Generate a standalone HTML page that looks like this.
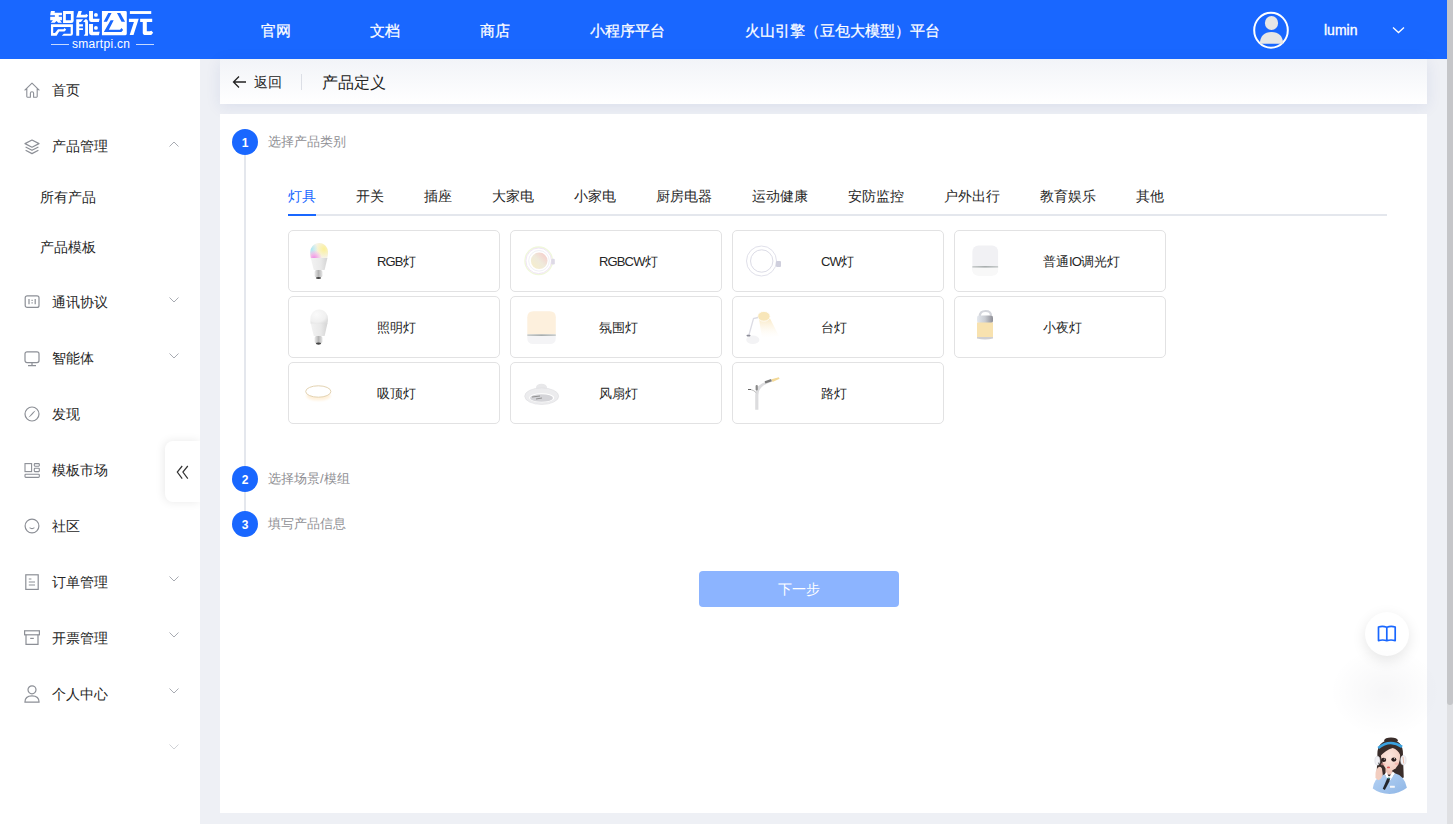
<!DOCTYPE html>
<html><head><meta charset="utf-8">
<style>
*{margin:0;padding:0;box-sizing:border-box}
html,body{width:1453px;height:824px;overflow:hidden;background:#eef0f5;font-family:"Liberation Sans",sans-serif;color:#333}
.abs{position:absolute}
#hdr{position:absolute;left:0;top:0;width:1447px;height:59px;background:#1967ff}
#side{position:absolute;left:0;top:59px;width:200px;height:765px;background:#fff}
#scroll{position:absolute;left:1447px;top:0;width:6px;height:824px;background:#dfe0e3}
#thumb{position:absolute;left:1447px;top:0;width:6px;height:705px;background:#c5c6c9;border-radius:0 0 3px 3px}
.nav{position:absolute;top:21px;font-size:15px;line-height:20px;color:#fff;white-space:nowrap;-webkit-text-stroke:0.25px #fff}
.mi{position:absolute;left:52px;font-size:14px;line-height:20px;color:#262626;white-space:nowrap}
.sub{position:absolute;left:40px;font-size:14px;line-height:20px;color:#262626;white-space:nowrap}
.ico{position:absolute;left:24px;width:16px;height:16px}
.chev{position:absolute;left:169px;width:10px;height:6px}
#crumb{position:absolute;left:220px;top:59px;width:1207px;height:45px;background:linear-gradient(#f2f4f8,#fff);box-shadow:0 3px 16px rgba(30,60,140,.09)}
#card{position:absolute;left:220px;top:114px;width:1207px;height:699px;background:#fff}
.step{position:absolute;left:232px;width:26px;height:26px;border-radius:50%;background:#1967ff;color:#fff;font-weight:bold;font-size:12px;line-height:28px;text-align:center}
.stxt{position:absolute;left:268px;font-size:13px;line-height:18px;color:#8f8f94;white-space:nowrap}
.tab{position:absolute;top:186px;font-size:14px;line-height:20px;color:#262626;white-space:nowrap}
.pc{position:absolute;width:212px;height:62px;border:1px solid #e2e2e3;border-radius:5px;background:#fff}
.pc .l{font-style:normal;letter-spacing:-0.85px}
.pc .t{position:absolute;left:88px;top:22px;font-size:13px;line-height:18px;color:#262626;white-space:nowrap}
.pc .im{position:absolute;left:9px;top:7px;width:44px;height:46px}
</style></head><body>
<svg width="0" height="0" style="position:absolute">
<defs>
<radialGradient id="yel"><stop offset="0" stop-color="#fbf09a"/><stop offset="1" stop-color="#fbf09a" stop-opacity="0"/></radialGradient>
<radialGradient id="cyan"><stop offset="0" stop-color="#a8e6f4"/><stop offset="1" stop-color="#a8e6f4" stop-opacity="0"/></radialGradient>
<radialGradient id="mag"><stop offset="0" stop-color="#f08ee6"/><stop offset="1" stop-color="#f08ee6" stop-opacity="0"/></radialGradient>
<radialGradient id="rgbA" cx="0.25" cy="0.3" r="0.8"><stop offset="0" stop-color="#b8ecf6"/><stop offset="0.45" stop-color="#f6f6d8"/><stop offset="1" stop-color="#f8ee9a"/></radialGradient>
<linearGradient id="rgbB" x1="0" y1="0" x2="0" y2="1"><stop offset="0" stop-color="#fff" stop-opacity="0"/><stop offset="1" stop-color="#f0a0e8" stop-opacity=".85"/></linearGradient>
<linearGradient id="bodyG" x1="0" y1="0" x2="1" y2="0"><stop offset="0" stop-color="#f2f2f2"/><stop offset=".6" stop-color="#e9e9e9"/><stop offset="1" stop-color="#d4d4d4"/></linearGradient>
<linearGradient id="baseG" x1="0" y1="0" x2="1" y2="0"><stop offset="0" stop-color="#ececec"/><stop offset=".5" stop-color="#b4b4b4"/><stop offset="1" stop-color="#e6e6e6"/></linearGradient>
<radialGradient id="domeW" cx="0.35" cy="0.35" r="0.75"><stop offset="0" stop-color="#fafafa"/><stop offset=".7" stop-color="#f0f0f0"/><stop offset="1" stop-color="#dcdcdc"/></radialGradient>
<linearGradient id="pastel" x1="0" y1="1" x2="1" y2="0"><stop offset="0" stop-color="#f7efc8"/><stop offset=".5" stop-color="#efeadb"/><stop offset="1" stop-color="#f6c8c8"/></linearGradient>
<linearGradient id="capG" x1="0" y1="0" x2="1" y2="0"><stop offset="0" stop-color="#e4e8ee"/><stop offset=".5" stop-color="#c9ccd2"/><stop offset="1" stop-color="#8e8e96"/></linearGradient>
<linearGradient id="beam" x1="0" y1="0" x2="0" y2="1"><stop offset="0" stop-color="#f9e8c2"/><stop offset="1" stop-color="#fffaf0" stop-opacity="0"/></linearGradient>
<linearGradient id="stripe" x1="0" y1="0" x2="1" y2="0"><stop offset="0" stop-color="#c8cccc"/><stop offset=".5" stop-color="#a8aeae"/><stop offset="1" stop-color="#c8cccc"/></linearGradient>
<filter id="blur1" x="-50%" y="-50%" width="200%" height="200%"><feGaussianBlur stdDeviation="1.2"/></filter>
<filter id="blur05" x="-50%" y="-50%" width="200%" height="200%"><feGaussianBlur stdDeviation="0.5"/></filter>
</defs></svg>
<div id="hdr"></div>
<div id="side"></div>
<div id="crumb"></div>
<div id="card"></div>
<div id="scroll"></div><div id="thumb"></div>

<!-- logo -->
<svg class="abs" style="left:0;top:0" width="200" height="59" viewBox="0 0 200 59">
<g transform="translate(48,8) scale(0.03717)" fill="#fff" fill-rule="evenodd">
<path d="M80,80 L185,80 L178,130 L375,130 L375,192 L290,192 L290,235 L375,235 L375,330 L322,330 L375,400 L272,400 L230,348 L182,400 L75,400 L132,330 L60,330 L60,235 L185,235 L185,192 L60,192 L68,130 Z"/>
<path d="M405,80 L690,80 L690,340 Q690,405 625,405 L405,405 Z M480,160 L480,330 L615,330 L615,160 Z"/>
<path d="M80,435 L670,435 L670,690 Q670,745 610,745 L372,745 L425,690 L610,690 L610,510 L140,510 L140,672 L188,672 L268,575 L418,575 L448,540 L490,585 L442,630 L300,630 L232,745 L80,745 Z"/>
<path d="M820,80 L910,80 L882,180 L1000,180 L1040,160 L1078,205 L1040,255 L760,255 Z"/>
<path d="M760,300 L945,300 L885,378 L840,378 L840,435 L940,435 L940,500 L840,500 L840,545 L940,545 L940,595 L840,595 L840,745 L760,745 Z"/>
<path d="M945,372 L1005,300 L1035,300 Q1075,320 1075,380 L1075,745 L962,745 L1000,690 L1000,385 Z"/>
<path d="M1105,80 L1210,80 L1210,292 L1390,292 L1368,380 L1168,380 Q1105,380 1105,318 Z"/>
<circle cx="1290" cy="185" r="52"/>
<path d="M1105,430 L1210,430 L1210,642 L1390,642 L1368,730 L1168,730 Q1105,730 1105,668 Z"/>
<circle cx="1290" cy="535" r="52"/>
</g>
<g transform="translate(100,8) scale(0.03853)" fill="#fff" fill-rule="evenodd">
<path d="M50,75 L660,75 Q695,75 695,110 L695,670 Q695,705 660,705 L50,705 Z M215,130 L95,355 L180,355 L300,130 Z M440,130 L560,355 L650,355 L525,130 Z M275,320 L100,625 L555,625 L600,570 L560,520 L520,565 L230,565 L355,320 Z"/>
<path d="M775,80 L1330,80 L1330,155 L775,155 Z"/>
<path d="M750,280 L1005,280 L870,700 L770,700 L880,365 L750,365 Z"/>
<path d="M1042,280 L1355,280 L1355,365 L1215,365 L1215,605 L1295,605 L1335,590 L1380,640 L1330,700 L1180,700 Q1110,700 1110,640 L1110,365 L1042,365 Z"/>
</g>
<path d="M51 44.5 H69 M136 44.5 H154" stroke="#fff" stroke-opacity=".75" stroke-width="1"/>
</svg>
<div class="abs" style="left:72px;top:37px;font-size:12px;line-height:14px;letter-spacing:0.3px;color:#fff;white-space:nowrap">smartpi.cn</div>

<!-- nav -->
<div class="nav" style="left:261px">官网</div>
<div class="nav" style="left:370px">文档</div>
<div class="nav" style="left:480px">商店</div>
<div class="nav" style="left:590px">小程序平台</div>
<div class="nav" style="left:745px">火山引擎（豆包大模型）平台</div>

<!-- user -->
<svg class="abs" style="left:1253px;top:11px" width="36" height="38" viewBox="0 0 36 38">
<ellipse cx="18" cy="19.2" rx="16.8" ry="17.5" fill="none" stroke="#fff" stroke-width="2"/>
<ellipse cx="18.5" cy="12" rx="6.6" ry="7" fill="#e6e6e6"/>
<path d="M6.8 32.8 Q7.5 21.2 18.5 21.1 Q29.5 21.2 30.2 32.8 Z" fill="#e6e6e6"/>
</svg>
<div class="abs" style="left:1324px;top:21px;font-size:14px;line-height:18px;color:#fff;-webkit-text-stroke:0.35px #fff">lumin</div>
<svg class="abs" style="left:1392px;top:26px" width="13" height="8" viewBox="0 0 13 8"><path d="M1 1.5 L6.5 6.5 L12 1.5" fill="none" stroke="#fff" stroke-width="1.3"/></svg>


<!-- sidebar -->
<svg class="ico" style="top:82px" viewBox="0 0 16 16"><path d="M0.6 8.4 L8 1.2 L15.4 8.4 M2.8 6.4 V14.6 Q2.8 15.2 3.4 15.2 H6.4 V11.2 Q6.4 9.8 8 9.8 Q9.6 9.8 9.6 11.2 V15.2 H12.6 Q13.2 15.2 13.2 14.6 V6.4" fill="none" stroke="#8c8f96" stroke-width="1.1" stroke-linejoin="round"/></svg>
<div class="mi" style="top:80px">首页</div>

<svg class="ico" style="top:139px" viewBox="0 0 16 16"><path d="M8 1 L15 4.6 L8 8.2 L1 4.6 Z M1.6 8 L8 11.3 L14.4 8 M1.6 11.2 L8 14.6 L14.4 11.2" fill="none" stroke="#8c8f96" stroke-width="1.2" stroke-linejoin="round"/></svg>
<div class="mi" style="top:136px">产品管理</div>
<svg class="chev" style="top:141px" viewBox="0 0 10 6"><path d="M0.5 5.5 L5 1 L9.5 5.5" fill="none" stroke="#a8abb2" stroke-width="1"/></svg>

<div class="sub" style="top:187px">所有产品</div>
<div class="sub" style="top:237px">产品模板</div>

<svg class="ico" style="top:294px" viewBox="0 0 16 16"><rect x="1.2" y="1.8" width="13.8" height="11.6" rx="2" fill="none" stroke="#8c8f96" stroke-width="1.2"/><path d="M5 5 V10.2 M11.2 5 V10.2" stroke="#8c8f96" stroke-width="1.2"/><path d="M8.1 5.8 V6.9 M8.1 8.3 V9.4" stroke="#8c8f96" stroke-width="1.2"/></svg>
<div class="mi" style="top:292px">通讯协议</div>
<svg class="chev" style="top:297px" viewBox="0 0 10 6"><path d="M0.5 0.5 L5 5 L9.5 0.5" fill="none" stroke="#a8abb2" stroke-width="1"/></svg>

<svg class="ico" style="top:351px" viewBox="0 0 16 16"><rect x="1" y="0.8" width="14" height="10.8" rx="2" fill="none" stroke="#8c8f96" stroke-width="1.2"/><path d="M8 11.6 V14.6 M4 14.6 H12" stroke="#8c8f96" stroke-width="1.2"/></svg>
<div class="mi" style="top:348px">智能体</div>
<svg class="chev" style="top:353px" viewBox="0 0 10 6"><path d="M0.5 0.5 L5 5 L9.5 0.5" fill="none" stroke="#a8abb2" stroke-width="1"/></svg>

<svg class="ico" style="top:406px" viewBox="0 0 16 16"><circle cx="8" cy="8" r="7" fill="none" stroke="#8c8f96" stroke-width="1.2"/><path d="M11.6 4.4 Q8.8 5.4 4.4 11.6 Q7.2 10.6 11.6 4.4 Z" fill="#8c8f96"/></svg>
<div class="mi" style="top:404px">发现</div>

<svg class="ico" style="top:462px" viewBox="0 0 16 16"><rect x="1" y="1.6" width="6.6" height="8" fill="none" stroke="#8c8f96" stroke-width="1.1"/><rect x="10.3" y="1.6" width="5" height="2.6" rx="0.6" fill="none" stroke="#8c8f96" stroke-width="1.1"/><rect x="10.3" y="6.3" width="5" height="3.3" rx="0.6" fill="none" stroke="#8c8f96" stroke-width="1.1"/><rect x="1" y="12.2" width="14.3" height="3.2" rx="0.8" fill="none" stroke="#8c8f96" stroke-width="1.1"/></svg>
<div class="mi" style="top:460px">模板市场</div>

<svg class="ico" style="top:518px" viewBox="0 0 16 16"><circle cx="8" cy="8" r="6.9" fill="none" stroke="#8c8f96" stroke-width="1.2"/><path d="M5.6 9.6 Q8 11.6 10.4 9.6" fill="none" stroke="#8c8f96" stroke-width="1.2"/></svg>
<div class="mi" style="top:516px">社区</div>

<svg class="ico" style="top:574px" viewBox="0 0 16 16"><rect x="1.8" y="0.8" width="12.4" height="14.6" fill="none" stroke="#8c8f96" stroke-width="1.2"/><path d="M4.8 5 H7.4 M4.8 8 H11 M4.8 11 H11" stroke="#8c8f96" stroke-width="1.2"/></svg>
<div class="mi" style="top:572px">订单管理</div>
<svg class="chev" style="top:576px" viewBox="0 0 10 6"><path d="M0.5 0.5 L5 5 L9.5 0.5" fill="none" stroke="#a8abb2" stroke-width="1"/></svg>

<svg class="ico" style="top:630px" viewBox="0 0 16 16"><rect x="0.6" y="0.8" width="14.8" height="4" fill="none" stroke="#8c8f96" stroke-width="1.2"/><path d="M2 4.8 V14.4 H14 V4.8" fill="none" stroke="#8c8f96" stroke-width="1.2"/><path d="M6.2 8.4 H9.8" stroke="#8c8f96" stroke-width="1.2"/></svg>
<div class="mi" style="top:628px">开票管理</div>
<svg class="chev" style="top:632px" viewBox="0 0 10 6"><path d="M0.5 0.5 L5 5 L9.5 0.5" fill="none" stroke="#a8abb2" stroke-width="1"/></svg>

<svg class="ico" style="top:685px;height:18px" viewBox="0 0 16 18"><circle cx="8" cy="4.8" r="4" fill="none" stroke="#8c8f96" stroke-width="1.2"/><path d="M0.9 17.2 Q0.9 10.8 8 10.8 Q15.1 10.8 15.1 17.2 Z" fill="none" stroke="#8c8f96" stroke-width="1.2" stroke-linejoin="round"/></svg>
<div class="mi" style="top:684px">个人中心</div>
<svg class="chev" style="top:688px" viewBox="0 0 10 6"><path d="M0.5 0.5 L5 5 L9.5 0.5" fill="none" stroke="#a8abb2" stroke-width="1"/></svg>

<svg class="chev" style="top:744px" viewBox="0 0 10 6"><path d="M0.5 0.5 L5 5 L9.5 0.5" fill="none" stroke="#d0d2d6" stroke-width="1"/></svg>

<!-- collapse btn -->
<div class="abs" style="left:165px;top:441px;width:35px;height:61px;background:#fff;border-radius:8px 0 0 8px;box-shadow:-1px 0 10px rgba(0,0,0,.09);clip-path:inset(-20px 0 -20px -20px)"></div>
<svg class="abs" style="left:176px;top:465px" width="13" height="15" viewBox="0 0 13 15"><path d="M6.2 1 L1.3 7 L6.2 13.6 M11.8 1 L6.9 7 L11.8 13.6" fill="none" stroke="#333" stroke-width="1.2"/></svg>


<!-- crumb -->
<svg class="abs" style="left:232px;top:75px" width="15" height="14" viewBox="0 0 15 14"><path d="M7 1.5 L1.5 7 L7 12.5 M1.5 7 H14" fill="none" stroke="#222" stroke-width="1.3"/></svg>
<div class="abs" style="left:254px;top:72px;font-size:14px;line-height:20px;color:#222;white-space:nowrap">返回</div>
<div class="abs" style="left:301px;top:74px;width:1px;height:16px;background:#dcdfe6"></div>
<div class="abs" style="left:322px;top:72px;font-size:16px;line-height:22px;color:#222;white-space:nowrap">产品定义</div>

<!-- steps -->
<div class="abs" style="left:244px;top:155px;width:2px;height:311px;background:#e4e7ed"></div>
<div class="abs" style="left:244px;top:492px;width:2px;height:19px;background:#e4e7ed"></div>
<div class="step" style="top:129px">1</div>
<div class="stxt" style="top:133px">选择产品类别</div>
<div class="step" style="top:466px">2</div>
<div class="stxt" style="top:470px">选择场景/模组</div>
<div class="step" style="top:511px">3</div>
<div class="stxt" style="top:515px">填写产品信息</div>

<!-- tabs -->
<div class="abs" style="left:288px;top:214px;width:1099px;height:2px;background:#e4e7ed"></div>
<div class="abs" style="left:288px;top:214px;width:28px;height:2px;background:#1967ff"></div>
<div class="tab" style="left:288px;color:#1967ff">灯具</div>
<div class="tab" style="left:356px">开关</div>
<div class="tab" style="left:424px">插座</div>
<div class="tab" style="left:492px">大家电</div>
<div class="tab" style="left:574px">小家电</div>
<div class="tab" style="left:656px">厨房电器</div>
<div class="tab" style="left:752px">运动健康</div>
<div class="tab" style="left:848px">安防监控</div>
<div class="tab" style="left:944px">户外出行</div>
<div class="tab" style="left:1040px">教育娱乐</div>
<div class="tab" style="left:1136px">其他</div>

<!-- cards -->
<div class="pc" style="left:288px;top:230px"><svg class="im" viewBox="0 0 44 46"><clipPath id="domeClip"><path d="M12.3 15.5 A8.9 9.6 0 1 1 30 15.5 Q29.8 18.5 29.3 20.5 L12.9 20.5 Q12.3 18.5 12.3 15.5 Z"/></clipPath><g clip-path="url(#domeClip)"><rect x="10" y="4" width="22" height="18" fill="#f6f3e8"/><circle cx="26" cy="11" r="9" fill="url(#yel)"/><circle cx="13" cy="11" r="7" fill="url(#cyan)"/><circle cx="16" cy="20" r="8" fill="url(#mag)"/></g><path d="M12.8 20 L29.4 20 Q28 26 26.6 32 L15.8 32 Q14.2 26 12.8 20 Z" fill="url(#bodyG)"/><rect x="16.5" y="32" width="8" height="7.4" rx="2" fill="url(#baseG)"/><ellipse cx="20.5" cy="40" rx="2.6" ry="1" fill="#444"/></svg><span class="t"><i class="l">RGB</i>灯</span></div>
<div class="pc" style="left:510px;top:230px"><svg class="im" viewBox="0 0 44 46"><circle cx="18.7" cy="22.8" r="13.8" fill="none" stroke="#f0f8dc" stroke-width="1.4" filter="url(#blur05)"/><circle cx="18.7" cy="22.8" r="12.8" fill="#fff" stroke="#ead8f0" stroke-width=".7"/><circle cx="19" cy="22.8" r="10.3" fill="none" stroke="#ececf2" stroke-width=".8"/><circle cx="19.2" cy="22.8" r="8.3" fill="url(#pastel)" filter="url(#blur05)"/><rect x="31.2" y="20.8" width="3.6" height="5.6" rx="1.2" fill="#dedae6"/></svg><span class="t"><i class="l">RGBCW</i>灯</span></div>
<div class="pc" style="left:732px;top:230px"><svg class="im" viewBox="0 0 44 46"><circle cx="19.5" cy="23" r="15" fill="#fff" stroke="#e0e0ea" stroke-width="1"/><circle cx="19.7" cy="23" r="11.2" fill="#fff" stroke="#dcdce6" stroke-width="1"/><rect x="34" y="23" width="5" height="6" rx="1" fill="#cfcfdd"/></svg><span class="t"><i class="l">CW</i>灯</span></div>
<div class="pc" style="left:954px;top:230px"><svg class="im" viewBox="0 0 44 46"><rect x="8.4" y="7.6" width="25.7" height="29.8" rx="6" fill="#f1f1f4" filter="url(#blur05)"/><rect x="8.4" y="28" width="25.7" height="1.8" fill="url(#stripe)"/><path d="M8.4 29.8 H34.1 V31.4 Q34.1 37.4 28.1 37.4 H14.4 Q8.4 37.4 8.4 31.4 Z" fill="#f8f8f8"/></svg><span class="t">普通<i class="l">IO</i>调光灯</span></div>
<div class="pc" style="left:288px;top:296px"><svg class="im" viewBox="0 0 44 46"><path d="M12.3 16 A8.9 9.6 0 1 1 30 16 Q29.8 18.5 29.4 20 L12.8 20 Q12.3 18.5 12.3 16 Z" fill="url(#domeW)"/><path d="M12.8 19.5 L29.4 19.5 Q28 26 26.6 32 L15.8 32 Q14.2 26 12.8 19.5 Z" fill="url(#bodyG)"/><rect x="16.5" y="32" width="8" height="7.4" rx="2" fill="url(#baseG)"/><ellipse cx="20.5" cy="39.6" rx="2.6" ry="1.1" fill="#444"/></svg><span class="t">照明灯</span></div>
<div class="pc" style="left:510px;top:296px"><svg class="im" viewBox="0 0 44 46"><path d="M7.3 30.6 V13.3 Q7.3 7.3 13.3 7.3 H29.8 Q35.8 7.3 35.8 13.3 V30.6 Z" fill="#fdf0dd"/><rect x="7.3" y="30.3" width="28.5" height="1.7" fill="url(#stripe)"/><path d="M7.3 32 H35.8 V34 Q35.8 40 29.8 40 H13.3 Q7.3 40 7.3 34 Z" fill="#f4f4f6"/></svg><span class="t">氛围灯</span></div>
<div class="pc" style="left:732px;top:296px"><svg class="im" viewBox="0 0 44 46"><path d="M17 15 L27.5 13.5 L37 32 L20 34 Z" fill="url(#beam)"/><ellipse cx="21.9" cy="12.3" rx="6.2" ry="4.9" fill="#f8e6b9" stroke="#fff" stroke-width=".8"/><path d="M16 13.5 L11.5 14.5 L6.8 31.5" fill="none" stroke="#dcdce4" stroke-width="1.3"/><ellipse cx="10.8" cy="35.8" rx="6.6" ry="4.3" fill="#f3f3f5"/><rect x="4.5" y="30.8" width="4" height="1.6" rx=".8" fill="#8c8c98"/></svg><span class="t">台灯</span></div>
<div class="pc" style="left:954px;top:296px"><svg class="im" viewBox="0 0 44 46"><path d="M15.8 12.5 Q15.8 7 21.5 7 Q27 7 27 11.5" fill="none" stroke="#d4d6dc" stroke-width="2.2"/><rect x="13" y="11.5" width="16" height="7.5" rx="2" fill="url(#capG)"/><rect x="13" y="18.5" width="16" height="15.5" fill="#f8e2af"/><path d="M13 33 H29 V34.5 Q21 36.5 13 34.5 Z" fill="#cfcfd2"/></svg><span class="t">小夜灯</span></div>
<div class="pc" style="left:288px;top:362px"><svg class="im" viewBox="0 0 44 46"><ellipse cx="20.5" cy="26" rx="12" ry="4.5" fill="#fff1dc" filter="url(#blur1)"/><ellipse cx="20.3" cy="21.5" rx="12.6" ry="5.7" fill="#fff" stroke="#dfcda8" stroke-width=".9"/></svg><span class="t">吸顶灯</span></div>
<div class="pc" style="left:510px;top:362px"><svg class="im" viewBox="0 0 44 46"><ellipse cx="21.5" cy="17.5" rx="5.5" ry="3.8" fill="#e8e8ea"/><ellipse cx="21.7" cy="26.2" rx="17" ry="8.3" fill="#ececee" stroke="#dedee0" stroke-width=".6"/><ellipse cx="21.7" cy="27.8" rx="12.5" ry="4.5" fill="#fff"/><ellipse cx="21.5" cy="28" rx="11.5" ry="3.8" fill="#d4d4d8"/><path d="M12 27 L20 26 M16 29 L22 28" stroke="#888" stroke-width=".9"/></svg><span class="t">风扇灯</span></div>
<div class="pc" style="left:732px;top:362px"><svg class="im" viewBox="0 0 44 46"><path d="M13.2 39.7 L13.2 25 Q13.5 17 20 13.5 Q24 11.2 29 9.8 L29.8 11.8 Q25 13.2 21.5 15.5 Q16.5 19 16.4 25 L16.4 39.7 Z" fill="#dcdcde"/><path d="M23 12.4 L29.5 10.2" stroke="#7a7a7a" stroke-width="2.4"/><path d="M29.5 9.2 L36.8 7.2 L37.6 8.8 L30.5 12 Z" fill="#f3d998"/><rect x="13.6" y="15" width="2.2" height="5.5" rx="1" fill="#8a8a8a"/><path d="M6 19.5 H9" stroke="#666" stroke-width="1"/><path d="M9 19.6 Q12 20.3 14.3 22.8" fill="none" stroke="#aaa" stroke-width=".8"/></svg><span class="t">路灯</span></div>

<!-- button -->
<div class="abs" style="left:699px;top:571px;width:200px;height:36px;background:#8cb4ff;border-radius:4px;color:#fff;font-size:14px;line-height:36px;text-align:center">下一步</div>

<!-- floating -->
<div class="abs" style="left:1365px;top:612px;width:44px;height:44px;border-radius:50%;background:#fff;box-shadow:0 4px 14px rgba(0,0,0,.1)"></div>
<svg class="abs" style="left:1377px;top:625px" width="20" height="17" viewBox="0 0 20 17"><path d="M1.5 2 Q5.5 0.8 9.8 2.2 V15.6 Q5.5 14.4 1.5 15.6 Z M9.8 2.2 Q14 0.8 18.2 2 V15.6 Q14 14.4 9.8 15.6" fill="none" stroke="#1967ff" stroke-width="1.7" stroke-linejoin="round"/></svg>


<div class="abs" style="left:1315px;top:630px;width:140px;height:120px;background:radial-gradient(ellipse 55px 45px at 70px 62px, rgba(0,0,40,.035), rgba(0,0,40,0) 100%)"></div>
<svg class="abs" style="left:1360px;top:730px" width="60" height="70" viewBox="0 0 706 824">
<defs><radialGradient id="skin" cx=".45" cy=".4" r=".7"><stop offset="0" stop-color="#fbe6de"/><stop offset="1" stop-color="#f1cbbd"/></radialGradient>
<linearGradient id="jack" x1="0" y1="0" x2="1" y2="1"><stop offset="0" stop-color="#b6d3f4"/><stop offset="1" stop-color="#8fb6e6"/></linearGradient></defs>
<ellipse cx="365" cy="120" rx="80" ry="32" fill="#3a2d2a"/>
<path d="M205,300 Q195,135 360,112 Q515,125 505,300 L515,560 Q470,580 430,545 L290,545 Q235,565 195,535 Z" fill="#3a2d2a"/>
<path d="M150,690 Q165,560 290,520 L345,600 L410,510 Q525,540 552,680 Q460,752 350,752 Q230,752 150,690 Z" fill="url(#jack)"/>
<rect x="300" y="430" width="80" height="95" fill="#eec4b6"/>
<path d="M290,520 L345,605 L412,510 L385,488 L342,560 L312,495 Z" fill="#fff"/>
<path d="M322,565 L356,565 L346,605 L292,705 L268,692 Z" fill="#23262c"/>
<ellipse cx="338" cy="568" rx="16" ry="10" fill="#3d7f80"/>
<rect x="352" y="655" width="58" height="24" rx="3" fill="#f4f6fa"/>
<path d="M245,300 Q248,200 360,198 Q465,205 472,300 Q472,400 420,450 Q372,492 330,472 Q262,432 245,300 Z" fill="url(#skin)"/>
<path d="M232,315 Q238,168 360,165 Q475,172 482,305 Q445,228 385,212 Q300,238 232,315 Z" fill="#3a2d2a"/>
<ellipse cx="278" cy="352" rx="30" ry="25" fill="#2a1d1c"/>
<ellipse cx="398" cy="348" rx="30" ry="25" fill="#2a1d1c"/>
<circle cx="286" cy="342" r="7" fill="#fff" opacity=".8"/>
<circle cx="406" cy="338" r="7" fill="#fff" opacity=".8"/>
<ellipse cx="270" cy="402" rx="26" ry="14" fill="#f4a8a0" opacity=".55"/>
<ellipse cx="432" cy="398" rx="26" ry="14" fill="#f4a8a0" opacity=".55"/>
<ellipse cx="335" cy="440" rx="19" ry="10" fill="#dd5a5a"/>
<path d="M215,212 Q350,100 495,198" fill="none" stroke="#3aa2e0" stroke-width="30"/>
<ellipse cx="205" cy="362" rx="30" ry="52" fill="#f1f1f5" stroke="#d2d2da" stroke-width="6"/>
<ellipse cx="510" cy="356" rx="32" ry="56" fill="#f4f4f7" stroke="#d2d2da" stroke-width="6"/>
<path d="M505,315 L515,395" stroke="#e09a80" stroke-width="8"/>
<path d="M218,385 Q235,440 262,448" fill="none" stroke="#2a2a2a" stroke-width="10"/>
<path d="M182,565 Q176,475 212,442 Q242,420 258,452 L268,525 Q252,585 215,592 Z" fill="#f2cdbf"/>
</svg>

</body></html>
